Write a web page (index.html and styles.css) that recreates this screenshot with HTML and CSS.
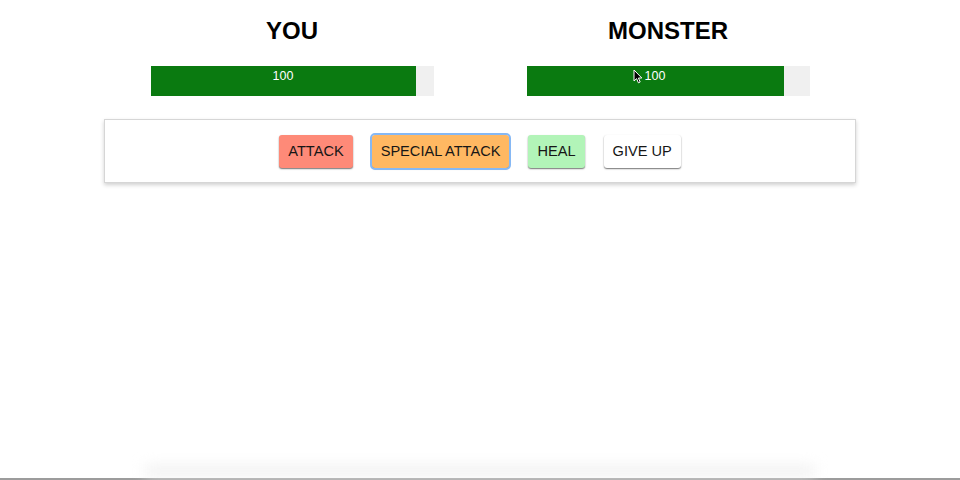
FILE: index.html
```html
<!DOCTYPE html>
<html lang="en">
<head>
<meta charset="utf-8">
<title>Monster Slayer</title>
<link rel="stylesheet" href="styles.css">
</head>
<body>
  <main class="app">
    <section class="players">
      <div class="player">
        <h1 class="player-name">YOU</h1>
        <div class="healthbar">
          <div class="healthbar-fill" style="width: 265px;">100</div>
        </div>
      </div>
      <div class="player">
        <h1 class="player-name">MONSTER</h1>
        <div class="healthbar">
          <div class="healthbar-fill" style="width: 257px;">100<svg class="cursor" viewBox="0 0 10 15" width="10" height="15" aria-hidden="true"><path d="M1 1 L1 12 L3.6 9.6 L5.4 13.8 L7.2 13 L5.4 9 L8.8 9 Z" fill="#000" stroke="#fff" stroke-width="1" stroke-linejoin="round"/></svg></div>
        </div>
      </div>
    </section>
    <section class="controls">
      <button class="btn btn-attack">ATTACK</button>
      <button class="btn btn-special is-focused">SPECIAL ATTACK</button>
      <button class="btn btn-heal">HEAL</button>
      <button class="btn btn-giveup">GIVE UP</button>
    </section>
  </main>
  <footer class="fold">
    <div class="fold-shadow"></div>
    <div class="fold-line"></div>
  </footer>
</body>
</html>
```

FILE: styles.css
```css
* { box-sizing: border-box; }

html, body {
  margin: 0;
  padding: 0;
  height: 480px;
  background: #fff;
  font-family: "Liberation Sans", Arial, Helvetica, sans-serif;
  color: #111;
}

body {
  display: flex;
  flex-direction: column;
  overflow: hidden;
}

.app {
  width: 752px;
  margin: 0 auto;
  padding-top: 17px;
}

.players {
  display: grid;
  grid-template-columns: 1fr 1fr;
}

.player {
  display: flex;
  flex-direction: column;
  align-items: center;
}

.player-name {
  margin: 0;
  font-size: 24px;
  line-height: 28px;
  font-weight: bold;
  color: #000;
}

.healthbar {
  margin-top: 21px;
  width: 283px;
  height: 30px;
  background: #f0f0f0;
  display: flex;
}

.healthbar-fill {
  position: relative;
  height: 30px;
  background: #0a7a10;
  color: #fff;
  font-size: 12.5px;
  line-height: 15px;
  padding-top: 3px;
  text-align: center;
}

.cursor {
  position: absolute;
  left: 106px;
  top: 3px;
}

.controls {
  margin-top: 23px;
  height: 64px;
  border: 1px solid #d6d6d6;
  box-shadow: 0 2px 4px #d0d0d0;
  display: flex;
  align-items: center;
  justify-content: center;
  gap: 19px;
}

.btn {
  height: 33px;
  padding: 0 9px;
  font-family: "Liberation Sans", Arial, Helvetica, sans-serif;
  font-size: 14.6px;
  color: #161616;
  border: none;
  border-radius: 3px;
  box-shadow: 0 1px 1.5px rgba(0, 0, 0, 0.55);
  cursor: pointer;
}

.btn-attack { background: #fe8a78; }
.btn-special { background: #ffb862; }
.btn-heal { background: #b2f4b8; }
.btn-giveup { background: #ffffff; }

.is-focused {
  outline: 2px solid #86b8f4;
  outline-offset: 0;
}

.fold {
  margin-top: auto;
}

.fold-shadow {
  height: 10px;
  margin: 0 145px 2px;
  background: #efefef;
  filter: blur(7px);
}

.fold-line {
  height: 2px;
  background: #9c9c9c;
}
```
